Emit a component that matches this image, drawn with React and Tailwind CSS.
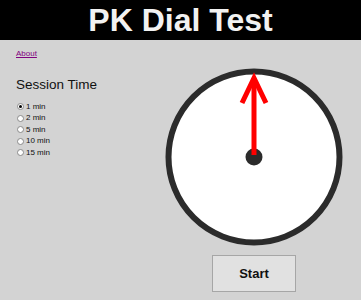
export default function App() {
  const times = ["1 min", "2 min", "5 min", "10 min", "15 min"];

  return (
    <div className="w-[361px] h-[300px] bg-[#d3d3d3] font-['Liberation_Sans',Arial,sans-serif] overflow-hidden">
      <div className="h-10 bg-black text-center text-[32px] font-bold leading-10 text-[#f2f2f2]">
        PK Dial Test
      </div>
      <div className="flex">
        <div className="w-[164px] pl-4 pt-[10px]">
          <a href="#" className="block text-[8px] leading-none text-[#800080] underline">
            About
          </a>
          <div className="mt-[20px] text-[13.5px] leading-none text-[#111]">Session Time</div>
          <div className="mt-[11px] flex flex-col gap-[3.5px]">
            {times.map((t, i) => (
              <label key={t} className="flex items-center gap-[2px] h-[8px] text-[8px] text-[#111]">
                <span className="w-[7px] h-[7px] rounded-full bg-white border border-[#8a8a8a] flex items-center justify-center ml-[1px]">
                  {i === 0 && <span className="w-[3px] h-[3px] rounded-full bg-black" />}
                </span>
                {t}
              </label>
            ))}
          </div>
        </div>
        <div className="w-[180px] pt-[27px] flex flex-col items-center">
          <svg width="180" height="180" viewBox="0 0 180 180">
            <circle cx="90" cy="90" r="85.5" fill="#fff" stroke="#2b2b2b" strokeWidth="6" />
            <circle cx="90" cy="90" r="8.5" fill="#2b2b2b" />
            <line x1="90" y1="88" x2="90" y2="12" stroke="#ff0000" strokeWidth="5" />
            <polyline points="78,36 90,11 102,36" fill="none" stroke="#ff0000" strokeWidth="5" strokeLinejoin="miter" />
          </svg>
          <button className="mt-[8px] w-[84px] h-[37px] border border-[#a6a6a6] bg-[#e1e1e1] text-[13px] font-bold text-[#111]">
            Start
          </button>
        </div>
      </div>
    </div>
  );
}
